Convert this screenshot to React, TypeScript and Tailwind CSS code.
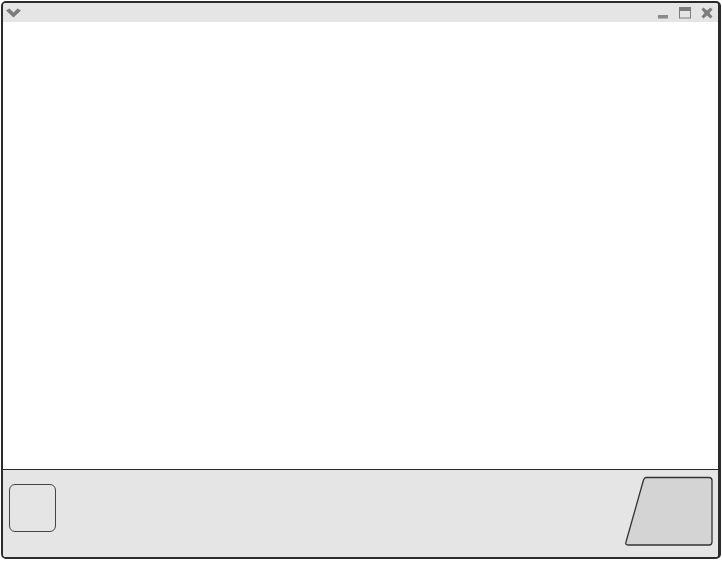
export default function App() {
  return (
    <div className="w-[722px] h-[562px] bg-white pt-px pl-px">
      <div className="w-[720px] h-[558px] border-2 border-r-[3px] border-b-[2px] border-[#2b2b2b] rounded-[5px] overflow-hidden flex flex-col bg-white">
        {/* title bar */}
        <div className="h-[19px] bg-[#e5e5e6] flex items-center justify-between pl-[2px] pr-[3px]">
          <svg width="17" height="12" viewBox="0 0 17 12">
            <path d="M1 3.5 L4.5 1.5 L8.5 5.5 L12.5 1.5 L16 3.5 L8.5 10.5 Z" fill="#7d7d7d" />
          </svg>
          <div className="flex items-center gap-[10px] pr-[2px]">
            <svg width="12" height="12" viewBox="0 0 12 12">
              <rect x="1" y="8" width="10" height="3.5" fill="#8a8a8a" />
            </svg>
            <svg width="12" height="12" viewBox="0 0 12 12">
              <rect x="0.5" y="0.5" width="11" height="10.5" fill="none" stroke="#7d7d7d" />
              <rect x="0.5" y="0.5" width="11" height="3.5" fill="#7d7d7d" />
            </svg>
            <svg width="12" height="12" viewBox="0 0 12 12">
              <path d="M2.5 0.5 L6 3.5 L9.5 0.5 L11.5 2.5 L8.5 6 L11.5 9.5 L9.5 11.5 L6 8.5 L2.5 11.5 L0.5 9.5 L3.5 6 L0.5 2.5 Z" fill="#7d7d7d" />
            </svg>
          </div>
        </div>

        {/* content */}
        <div className="flex-1 bg-white" />

        {/* bottom panel */}
        <div className="h-[88px] border-t border-[#2b2b2b] bg-[#e5e5e6] flex items-start justify-between pl-[6px] pr-[4px]">
          <div className="mt-[14px] w-[47px] h-[48px] rounded-[6px] border-[1.5px] border-[#444] bg-[#e5e5e6]" />
          <svg width="90" height="72" viewBox="0 0 90 72" className="mt-[6px]">
            <path
              d="M22 1.5 L85 1.5 Q88 1.5 88 4.5 L88 66 Q88 69 85 69 L4 69 Q1 69 2 66 L19.5 4 Q20.5 1.5 22 1.5 Z"
              fill="#d4d4d5"
              stroke="#333"
              strokeWidth="1.3"
            />
          </svg>
        </div>
      </div>
    </div>
  );
}
